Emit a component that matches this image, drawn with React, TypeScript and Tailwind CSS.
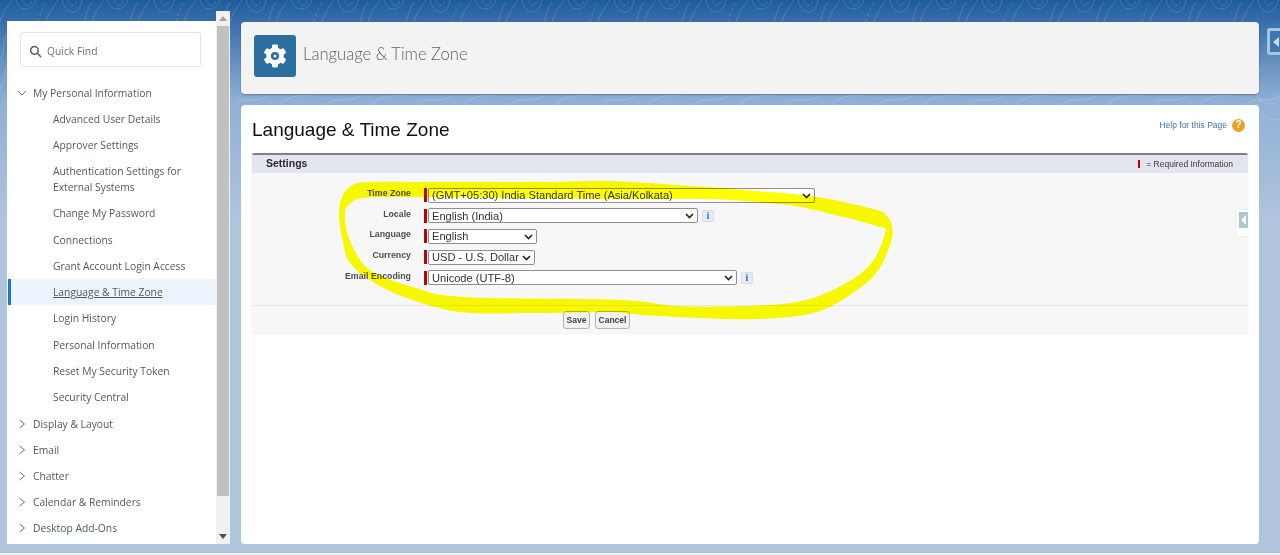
const CHILDREN = [
  'Advanced User Details',
  'Approver Settings',
  'Authentication Settings for External Systems',
  'Change My Password',
  'Connections',
  'Grant Account Login Access',
  'Language & Time Zone',
  'Login History',
  'Personal Information',
  'Reset My Security Token',
  'Security Central',
];

const GROUPS = ['Display & Layout', 'Email', 'Chatter', 'Calendar & Reminders', 'Desktop Add-Ons'];

const FIELDS = [
  { label: 'Time Zone', value: '(GMT+05:30) India Standard Time (Asia/Kolkata)', width: 'w-[387px]', info: false },
  { label: 'Locale', value: 'English (India)', width: 'w-[270px]', info: true },
  { label: 'Language', value: 'English', width: 'w-[109px]', info: false },
  { label: 'Currency', value: 'USD - U.S. Dollar', width: 'w-[107px]', info: false },
  { label: 'Email Encoding', value: 'Unicode (UTF-8)', width: 'w-[309px]', info: true },
];

// contour columns repeated along the top strip of the background
const CONTOUR_X = Array.from({ length: 28 }, (_, i) => i * 46);

const MARK_OUTER: [number, number][] = [
  [367, 182], [430, 182], [537, 182], [610, 181], [677, 185], [743, 190], [817, 197], [877, 210], [887, 216], [892, 226],
  [891, 242], [877, 272], [850, 295], [817, 312], [777, 318], [727, 319], [643, 315], [610, 312], [530, 313], [460, 312],
  [407, 298], [373, 282], [350, 263], [343, 242], [339, 215], [342, 197], [350, 187],
];

const MARK_INNER: [number, number][] = [
  [363, 198], [410, 197], [610, 199], [710, 199], [777, 204], [810, 209], [877, 226], [885, 233], [870, 265], [837, 288],
  [797, 302], [743, 306], [677, 306], [620, 300], [463, 297], [413, 287], [373, 272], [357, 255], [347, 232], [345, 212], [350, 204],
];

// closed Catmull-Rom curve through the points
function smooth(pts: [number, number][]) {
  const n = pts.length;
  let d = `M${pts[0][0]} ${pts[0][1]}`;
  for (let i = 0; i < n; i++) {
    const [p0, p1, p2, p3] = [pts[(i - 1 + n) % n], pts[i], pts[(i + 1) % n], pts[(i + 2) % n]];
    d += ` C${p1[0] + (p2[0] - p0[0]) / 6} ${p1[1] + (p2[1] - p0[1]) / 6} ${p2[0] - (p3[0] - p1[0]) / 6} ${p2[1] - (p3[1] - p1[1]) / 6} ${p2[0]} ${p2[1]}`;
  }
  return d + ' Z';
}

function InfoIcon() {
  return (
    <span className="ml-1 flex h-[12px] w-[12px] items-center justify-center rounded-[2px] border border-[#d5dde5] bg-[#e3edf7] font-['Liberation_Serif',serif] text-[10px] font-bold leading-none text-[#2a73c5]">
      i
    </span>
  );
}

function GearIcon() {
  return (
    <svg width="26" height="28" viewBox="0 0 26 28" fill="none">
      <circle cx="13" cy="14" r="6.4" stroke="white" strokeWidth="4.6" />
      {[0, 60, 120, 180, 240, 300].map(a => (
        <rect key={a} x="10" y="2.6" width="6" height="5" rx="1.4" fill="white" transform={`rotate(${a} 13 14)`} />
      ))}
      <circle cx="13" cy="14" r="1.6" fill="white" fillOpacity="0.85" />
    </svg>
  );
}

function Chevron({ open }: { open: boolean }) {
  return (
    <svg width="14" height="14" viewBox="0 0 14 14" fill="none" stroke="#6c7075" strokeWidth="1" className="ml-[8px] shrink-0">
      {open ? <path d="M3 5 L7 9 L11 5" /> : <path d="M4.5 3 L9.5 7 L4.5 11" />}
    </svg>
  );
}

function SearchIcon() {
  return (
    <svg width="13" height="13" viewBox="0 0 13 13" fill="none" stroke="#55585c" strokeWidth="1.5">
      <circle cx="5.4" cy="5.4" r="3.8" />
      <path d="M8.3 8.3 L12 12" />
    </svg>
  );
}

export default function App() {
  return (
    <div className="relative h-[555px] w-[1280px] overflow-hidden bg-gradient-to-b from-[#1c5c9c] via-[#8fb0d6] via-[18%] to-[#b0c4de] to-[40%] font-['Open_Sans',sans-serif]">
      {/* Background contour lines */}
      <svg className="absolute left-0 top-0" width="1280" height="130" viewBox="0 0 1280 130" fill="none" stroke="#ffffff" strokeOpacity="0.16">
        {CONTOUR_X.map((x, i) => (
          <g key={x}>
            <path d={`M${x} 22 C${x + 3} 12 ${x + 8} 6 ${x + 12} 0`} />
            <path d={`M${x + 16} 0 C${x + 18} 12 ${x + 32} ${i % 2 ? 20 : 12} ${x + 36} 0`} />
            <path d={`M${x + 22} 0 C${x + 24} 6 ${x + 30} 8 ${x + 31} 0`} strokeDasharray={i % 2 ? '3 2' : undefined} />
            <path d={`M${x + 38} 22 C${x + 40} 14 ${x + 42} 8 ${x + 46} 2`} strokeDasharray={i % 3 ? undefined : '3 3'} />
            <path d={`M${x + 4} 105 C${x + 12} 94 ${x + 26} ${i % 2 ? 106 : 96} ${x + 38} 95`} />
          </g>
        ))}
        <path d="M1262 70 C1240 90 1270 118 1280 96" />
        <path d="M1262 100 C1250 104 1268 126 1280 118" />
        <path d="M0 60 C6 50 2 40 7 34" />
        <path d="M0 90 C8 70 2 80 7 64" />
      </svg>

      <div className="relative flex h-[545px] items-start">
        {/* Sidebar */}
        <div className="ml-[7px] mt-[11px] flex h-[534px] items-start">
          <aside className="mt-[10px] h-[523px] w-[209px] overflow-hidden bg-white text-[10.3px] leading-[16px] text-[#54585e]">
            <div className="ml-[13px] mt-[11px] flex h-[35px] w-[181px] items-center rounded-[3px] border border-[#e3e4e6] pl-[8px] pt-[3px] text-[#6f7378]">
              <SearchIcon />
              <span className="ml-[5px]">Quick Find</span>
            </div>
            <div className="mt-[12.5px] flex h-[26px] items-center">
              <Chevron open />
              <span className="ml-[4px]">My Personal Information</span>
            </div>
            {CHILDREN.map(label => {
              const active = label === 'Language & Time Zone';
              const tall = label.startsWith('Authentication');
              return (
                <div
                  key={label}
                  className={`flex items-center pr-[20px] ${tall ? 'h-[42px]' : 'h-[26.3px]'} ${
                    active ? 'ml-[1px] border-l-[3px] border-[#1b76d2] bg-[#edf4fd] pl-[42px] underline' : 'pl-[46px]'
                  }`}
                >
                  {label}
                </div>
              );
            })}
            {GROUPS.map(label => (
              <div key={label} className="flex h-[26.2px] items-center">
                <Chevron open={false} />
                <span className="ml-[4px]">{label}</span>
              </div>
            ))}
          </aside>
          {/* Scrollbar */}
          <div className="flex h-[533px] w-[14px] flex-col items-center bg-[#f1f1f1]">
            <div className="flex h-[15px] items-center">
              <span className="h-0 w-0 border-x-[4px] border-b-[5px] border-x-transparent border-b-[#a3a3a3]" />
            </div>
            <div className="h-[470px] w-[12px] bg-[#c1c1c1]" />
            <div className="mt-auto flex h-[15px] items-center">
              <span className="h-0 w-0 border-x-[4px] border-t-[5px] border-x-transparent border-t-[#505050]" />
            </div>
          </div>
        </div>

        {/* Main */}
        <main className="ml-[11px] mt-[22px] flex w-[1018px] flex-col gap-[11px]">
          <header className="flex h-[72px] items-start rounded-[4px] bg-[#f3f3f3] pl-[13px] pt-[13px] shadow-[0_1px_2px_rgba(0,0,0,0.3)]">
            <div className="flex h-[42px] w-[42px] items-center justify-center rounded-[3px] bg-[#2a6f9f]">
              <GearIcon />
            </div>
            <h2 className="ml-[7px] mt-[7px] font-['Lato',sans-serif] text-[16.6px] font-light leading-[24px] text-[#5f6368]">Language &amp; Time Zone</h2>
          </header>

          <section className="h-[439px] rounded-[4px] bg-white px-[11px] font-['Liberation_Sans',sans-serif]">
            <div className="flex h-[48px] items-center justify-between">
              <h1 className="pt-[2px] text-[19px] text-[#101010]">Language &amp; Time Zone</h1>
              <div className="mr-[3px] -mt-[8px] flex items-center text-[8.5px] text-[#3d74b0]">
                Help for this Page
                <span className="ml-[5px] flex h-[13px] w-[13px] items-center justify-center rounded-full bg-[#e8a125] text-[10px] font-bold leading-none text-white">
                  ?
                </span>
              </div>
            </div>

            <div className="relative rounded-[3px] border-t-2 border-[#7b8098] bg-[#f7f7f8] shadow-[0_0_1px_rgba(0,0,0,0.25)]">
              <div className="flex h-[18px] items-center justify-between bg-[#e2e5ee] pl-[14px] pr-[15px]">
                <span className="text-[10.5px] font-bold text-[#2b2b2b]">Settings</span>
                <span className="flex items-center text-[8.5px] text-[#3a3a3a]">
                  <span className="mr-[6px] h-[8px] w-[2.5px] bg-[#c00000]" />= Required Information
                </span>
              </div>

              <div className="flex h-[132px] flex-col gap-[5.7px] pt-[14.5px]">
                {FIELDS.map(f => (
                  <div key={f.label} className="flex h-[15px] items-center">
                    <label className="-mt-[3px] w-[159px] text-right text-[8.8px] font-bold text-[#505050]">{f.label}</label>
                    <span className="ml-[13px] h-[14px] w-[3px] bg-[#c00000]" />
                    <span className={`relative ml-[1px] h-[15px] ${f.width}`}>
                      <select
                        className="block h-full w-full appearance-none rounded-[2px] border border-[#8f8f8f] bg-white pl-[3px] pt-[1px] text-[11.1px] leading-none text-[#333333]"
                        defaultValue={f.value}
                      >
                        <option>{f.value}</option>
                      </select>
                      <svg className="pointer-events-none absolute right-[4px] top-[5px]" width="9" height="6" viewBox="0 0 9 6" fill="none" stroke="#222222" strokeWidth="1.6">
                        <path d="M1 1 L4.5 4.5 L8 1" />
                      </svg>
                    </span>
                    {f.info && <InfoIcon />}
                  </div>
                ))}
              </div>

              <div className="flex h-[29px] items-center gap-[5px] border-t border-[#e6e6e6] pl-[311px]">
                <button className="h-[18px] w-[27px] rounded-[3px] border border-[#b5b5b5] bg-[#f1f1f1] text-[8.5px] font-bold text-[#444444]">Save</button>
                <button className="h-[18px] w-[35px] rounded-[3px] border border-[#b5b5b5] bg-[#f1f1f1] text-[8.5px] font-bold text-[#444444]">Cancel</button>
              </div>

              {/* Collapse handle */}
              <div className="absolute right-0 top-[54px] flex h-[28px] w-[13px] items-center justify-end rounded-l-[3px] border-y border-l border-[#ececec] bg-white">
                <span className="mb-[6px] flex h-[16px] w-[9px] items-center justify-center bg-[#a9c6d4]">
                  <span className="h-0 w-0 border-y-[5px] border-r-[5px] border-y-transparent border-r-white" />
                </span>
              </div>
            </div>
          </section>
        </main>
      </div>

      {/* Strip under the page */}
      <div className="absolute bottom-0 left-0 h-[2px] w-full bg-[#eef1f5]" />

      {/* Right edge handle */}
      <div className="absolute left-[1267px] top-[28px] flex h-[27px] w-[20px] items-center rounded-[3px] border-[3px] border-[#a9c4de] bg-[#3f78b0] pl-[3px]">
        <span className="h-0 w-0 border-y-[5px] border-r-[6px] border-y-transparent border-r-[#c9dbea]" />
      </div>

      {/* Yellow highlighter mark */}
      <svg className="pointer-events-none absolute left-0 top-0 mix-blend-multiply" width="1280" height="555" viewBox="0 0 1280 555">
        <path fill="#ffff00" fillRule="evenodd" d={`${smooth(MARK_OUTER)} ${smooth(MARK_INNER)}`} />
      </svg>
    </div>
  );
}
